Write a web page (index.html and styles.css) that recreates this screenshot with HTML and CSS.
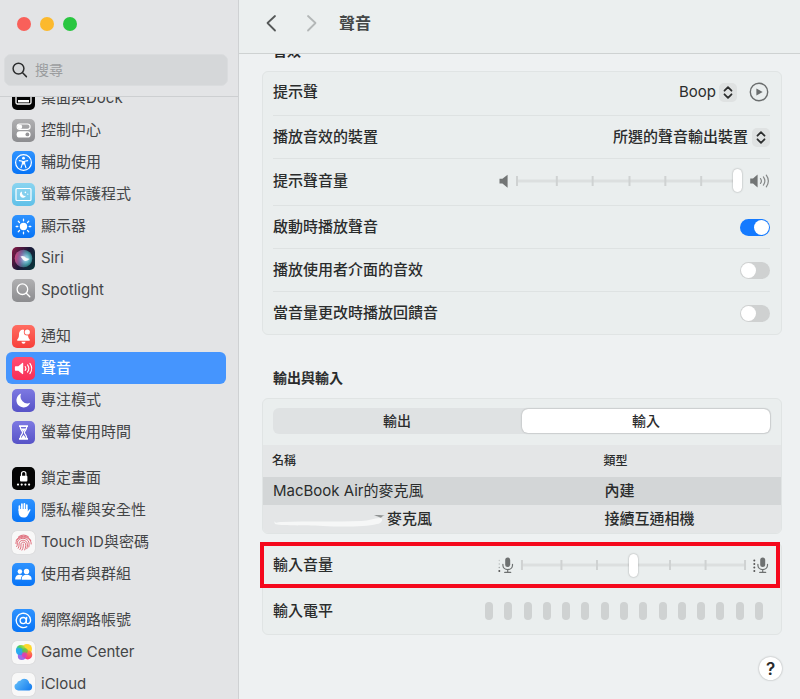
FILE: index.html
```html
<!DOCTYPE html>
<html lang="zh-Hant">
<head>
<meta charset="utf-8">
<meta name="viewport" content="width=device-width, initial-scale=1">
<title>聲音</title>
<link rel="stylesheet" href="styles.css">
</head>
<body>
<div class="window">
  <aside class="sidebar">
    <div class="sidebar-top">
      <div class="lights">
        <button class="light close" aria-label="關閉"></button>
        <button class="light minimise" aria-label="縮到最小"></button>
        <button class="light zoom" aria-label="縮放"></button>
      </div>
      <label class="search">
        <svg width="16" height="16" viewBox="0 0 16 16" fill="none" stroke="#2c2d2e" stroke-width="1.5" stroke-linecap="round"><circle cx="6.5" cy="6.6" r="5.4"/><path d="M10.6 10.8 14.4 14.6"/></svg>
        <input type="search" placeholder="搜尋" aria-label="搜尋">
      </label>
    </div>
    <nav class="list">
      <div class="group">
        <a href="#" class="item"><svg class="icon black" viewBox="0 0 23 23"><rect x="4" y="5" width="15" height="12" rx="1.5" fill="none" stroke="#fff" stroke-width="1.3"/><rect x="6" y="13" width="11" height="2.4" fill="#fff"/></svg>桌面與Dock</a>
        <a href="#" class="item"><svg class="icon gray" viewBox="0 0 23 23"><rect x="5.1" y="5" width="13" height="5.4" rx="2.7" fill="none" stroke="#fff" stroke-width="1.1"/><circle cx="7.9" cy="7.7" r="2.3" fill="#fff"/><rect x="4.6" y="12.2" width="14" height="6.4" rx="3.2" fill="#fff"/><circle cx="15.4" cy="15.4" r="1.9" fill="#949497"/></svg>控制中心</a>
        <a href="#" class="item"><svg class="icon blue" viewBox="0 0 23 23"><circle cx="11.5" cy="11.5" r="7.9" fill="none" stroke="#fff" stroke-width="1.2"/><circle cx="11.5" cy="7.2" r="1.4" fill="#fff"/><path d="M7.3 9.6 10.4 10.3V12.6L9 16.8M15.7 9.6 12.6 10.3V12.6L14 16.8" fill="none" stroke="#fff" stroke-width="1.1" stroke-linecap="round" stroke-linejoin="round"/><path d="M10.3 9.9h2.4v3.6h-2.4z" fill="#fff"/></svg>輔助使用</a>
        <a href="#" class="item"><svg class="icon sky" viewBox="0 0 23 23"><rect x="4" y="5.5" width="15" height="12" rx="1" fill="#8ed3ef" fill-opacity=".5" stroke="#fff" stroke-width="1.2"/><path d="M10 8.600a3.200 3.200 0 1 0 4 4.200 3.300 3.300 0 0 1-4-4.200z" fill="#fff"/><circle cx="13.400" cy="9.400" r=".8" fill="#fff"/><circle cx="15.800" cy="11.200" r=".6" fill="#fff"/></svg>螢幕保護程式</a>
        <a href="#" class="item"><svg class="icon blue" viewBox="0 0 23 23"><circle cx="11.5" cy="11.5" r="3.7" fill="#fff"/><path d="M11.5 4.2v1.6M11.5 17.2v1.6M4.2 11.5h1.6M17.2 11.5h1.6M6.3 6.3 7.5 7.5M15.5 15.5 16.7 16.7M6.3 16.7 7.5 15.5M15.5 7.5 16.7 6.3" stroke="#fff" stroke-width="1.3" stroke-linecap="round"/></svg>顯示器</a>
        <a href="#" class="item"><svg class="icon siri" viewBox="0 0 23 23">
          <defs><radialGradient id="orb" cx=".58" cy=".5" r=".55"><stop offset="0" stop-color="#fff"/><stop offset=".3" stop-color="#9fd0ea"/><stop offset=".65" stop-color="#4a93a4" stop-opacity=".9"/><stop offset="1" stop-color="#2b6a6a" stop-opacity=".5"/></radialGradient>
          <linearGradient id="rose" x1="0" y1=".3" x2="1" y2=".5"><stop offset="0" stop-color="#d9407c"/><stop offset=".4" stop-color="#8f5aa6" stop-opacity=".6"/><stop offset=".8" stop-color="#2cc3b4" stop-opacity=".2"/></linearGradient></defs>
          <circle cx="11.5" cy="11.5" r="8.800" fill="url(#orb)"/><circle cx="11.5" cy="11.5" r="8.800" fill="url(#rose)"/><path d="M8.400 9.600c2-1.600 4.600-.2 5.600 1.300 1.200.3 3.100.5 3.700 1.200-1.300.8-2.600 1.900-4.400 1.800-2.200-.1-2.800-2.200-4.900-4.300z" fill="#fff" opacity=".9"/></svg>Siri</a>
        <a href="#" class="item"><svg class="icon gray" viewBox="0 0 23 23" fill="none" stroke="#fff" stroke-width="1.3" stroke-linecap="round"><circle cx="10.400" cy="10.200" r="5.300"/><path d="M14.300 14.200 17.800 17.700"/></svg>Spotlight</a>
      </div>
      <div class="group">
        <a href="#" class="item"><svg class="icon red" viewBox="0 0 23 23"><path d="M11.300 4.400c-3.200.2-4.300 2.600-4.300 5 0 3.100-.9 4.100-1.700 5.100-.5.700-.2 1.200.5 1.200h11.400c.7 0 1-.5.500-1.200-.8-1-1.700-2-1.700-5.100z" fill="#fff"/><path d="M9.500 16.700h4a2 2 0 0 1-4 0z" fill="#fff"/><circle cx="15.300" cy="7" r="3.500" fill="#fb5a53"/><circle cx="15.300" cy="7" r="2.600" fill="#fff"/></svg>通知</a>
        <a href="#" class="item selected" aria-current="page"><svg class="icon pink" viewBox="0 0 23 23"><path d="M3.500 9.300h2.800l4-3.300c.4-.3.900-.1.900.4v10.200c0 .5-.5.700-.9.400l-4-3.300H3.500c-.4 0-.6-.2-.6-.6V9.900c0-.4.200-.6.600-.6z" fill="#fff"/><path d="M13.200 9.500a3.400 3.400 0 0 1 0 4M15.500 7.900a6 6 0 0 1 0 7.200M17.900 6.400a8.800 8.800 0 0 1 0 10.200" fill="none" stroke="#fff" stroke-width="1.100" stroke-linecap="round"/></svg>聲音</a>
        <a href="#" class="item"><svg class="icon indigo" viewBox="0 0 23 23"><path d="M9.200 4.600a7.100 7.100 0 1 0 9 9.200 6.900 6.900 0 0 1-9-9.200z" fill="#fff"/></svg>專注模式</a>
        <a href="#" class="item"><svg class="icon indigo" viewBox="0 0 23 23"><path d="M7 4.200h9v1.700H7zM7 17.100h9v1.700H7z" fill="#fff"/><path d="M8.200 5.500c0 3.500 2.400 4.300 2.400 6s-2.400 2.500-2.400 6M14.800 5.500c0 3.500-2.400 4.300-2.400 6s2.400 2.500 2.400 6" fill="none" stroke="#fff" stroke-width="1.200"/><path d="M8.800 7.400h5.400l-2.700 3.400zM11.500 13.800l2.600 3.400H8.900z" fill="#fff"/></svg>螢幕使用時間</a>
      </div>
      <div class="group">
        <a href="#" class="item"><svg class="icon black" viewBox="0 0 23 23"><rect x="8" y="8.800" width="7.400" height="5.700" rx="1" fill="#fff"/><path d="M9.500 9V6.700a2.200 2.200 0 0 1 4.400 0V9" fill="none" stroke="#fff" stroke-width="1.200"/><g fill="#fff"><circle cx="6" cy="17.600" r="1.100"/><circle cx="9.700" cy="17.600" r="1.100"/><circle cx="13.400" cy="17.600" r="1.100"/><circle cx="17.100" cy="17.600" r="1.100"/></g></svg>鎖定畫面</a>
        <a href="#" class="item"><svg class="icon blue" viewBox="0 0 23 23"><path d="M7.400 11.500V7.200M9.900 10.500V5.200M12.400 10.500V4.800M14.800 11V6.200" stroke="#fff" stroke-width="1.700" stroke-linecap="round"/><path d="M6.600 10h9v2.600l1.700-2.100c.6-.6 1.500 0 1.100.8l-2.600 5c-.8 1.500-2 2.300-4 2.300-3.300 0-5.200-1.900-5.200-5z" fill="#fff"/></svg>隱私權與安全性</a>
        <a href="#" class="item"><svg class="icon white" viewBox="0 0 23 23" fill="none" stroke="#dc5c6c" stroke-width=".9" stroke-linecap="round"><path d="M6.500 5.800a7.600 7.600 0 0 1 10 0M4.300 9.200c2.200-5.200 12-5.800 14.500.4M3.900 12.500c-.2-8.600 15.500-8.800 15.300.5M4.700 15.600c1.500-1.500-.4-3.600 1.400-6 2.500-3.400 9.300-3 10.700 1.500.5 1.900.3 3.400 0 4.900M6.200 17.300c1.600-2 .2-4 1.300-6 1.500-2.900 6.800-2.600 7.700 1 .5 2 .2 3.800-.4 5.400M8 18.500c1.700-2.200.5-4.300 1.200-6.100.9-1.900 3.900-1.600 4.400.6.400 2-.1 4-.9 5.900M10 19.100c1.500-2.300 1.300-4.200 1.300-6"/></svg>Touch ID與密碼</a>
        <a href="#" class="item"><svg class="icon blue" viewBox="0 0 23 23" fill="#fff"><circle cx="7.900" cy="8.600" r="2.300"/><path d="M3.200 16.400c0-3.300 2-4.600 4.700-4.600 1.100 0 2 .2 2.700.7-1.300 1-1.700 2.500-1.700 3.900z"/><circle cx="14.500" cy="8.400" r="2.700"/><path d="M9.700 16.800c-.3-3.600 2-5 4.900-5 2.800 0 5.300 1.400 5 5z"/></svg>使用者與群組</a>
      </div>
      <div class="group">
        <a href="#" class="item"><svg class="icon blue" viewBox="0 0 23 23" fill="none" stroke="#fff" stroke-width="1.300" stroke-linecap="round"><circle cx="11.200" cy="11.600" r="3.100"/><path d="M14.700 8.500 14.200 12.700c-.2 2.900 4.400 2.500 4.400-1.700a7.200 7.200 0 1 0-3.800 6.800"/></svg>網際網路帳號</a>
        <a href="#" class="item"><svg class="icon white" viewBox="0 0 23 23">
          <defs><linearGradient id="g1" x1="0" y1="1" x2="1" y2="0"><stop offset=".3" stop-color="#29b6f5"/><stop offset=".6" stop-color="#54cf58"/><stop offset="1" stop-color="#ffe22a"/></linearGradient><linearGradient id="g2" x1="0" y1="0" x2="0" y2="1"><stop offset="0" stop-color="#ff9c2e"/><stop offset="1" stop-color="#fb2d78"/></linearGradient></defs>
          <circle cx="15" cy="7.900" r="5" fill="#ffd72e"/><circle cx="9" cy="9.100" r="5.100" fill="url(#g1)"/><circle cx="15.700" cy="13.800" r="4.600" fill="url(#g2)"/><circle cx="9.800" cy="14.900" r="4" fill="#8b52e8" opacity=".85"/><circle cx="7.800" cy="10.500" r="3.600" fill="#27a9f1" opacity=".8"/><circle cx="13" cy="10" r="2.800" fill="#63bd4a" opacity=".8"/><circle cx="12.600" cy="14" r="2.800" fill="#e63cab" opacity=".8"/></svg>Game Center</a>
        <a href="#" class="item"><svg class="icon white" viewBox="0 0 23 23"><defs><linearGradient id="cl" x1="0" y1="0" x2="1" y2=".6"><stop offset="0" stop-color="#6cc5fa"/><stop offset="1" stop-color="#1e84f0"/></linearGradient></defs><path d="M6.300 17.400a3.700 3.700 0 0 1-1.300-7.200 3 3 0 0 1 3.300-2.500 5 5 0 0 1 8.900 2.500 3.700 3.700 0 0 1 .2 7.200z" fill="url(#cl)"/></svg>iCloud</a>
      </div>
    </nav>
  </aside>

  <main class="main">
    <header class="toolbar">
      <button class="nav-button" aria-label="返回"><svg width="12" height="18" viewBox="0 0 12 18"><path d="M10 2 2.500 9l7.500 7.500" fill="none" stroke="#555858" stroke-width="1.800" stroke-linecap="round" stroke-linejoin="round"/></svg></button>
      <button class="nav-button" aria-label="往前" disabled><svg width="12" height="18" viewBox="0 0 12 18"><path d="M2 2l7.500 7L2 16.500" fill="none" stroke="#b3b7b7" stroke-width="1.800" stroke-linecap="round" stroke-linejoin="round"/></svg></button>
      <h1 class="title">聲音</h1>
    </header>
    <div class="content">
      <h2 class="heading scrolled">音效</h2>
      <section class="card">
        <div class="row raised">
          <label for="alert">提示聲</label>
          <span class="popup"><select id="alert" class="latin"><option>Boop</option></select><svg class="arrows" viewBox="0 0 18 18"><path d="M5.500 7.200 9 3.700l3.500 3.500M5.500 10.800 9 14.300l3.500-3.500"/></svg></span>
          <button class="play" aria-label="播放"><svg width="20" height="20" viewBox="0 0 20 20"><circle cx="10" cy="10" r="8.700" fill="none" stroke="#6b6e6e" stroke-width="1.400"/><path d="M7.400 6.400v7.200l6.300-3.600z" fill="#6b6e6e"/></svg></button>
        </div>
        <div class="row">
          <label for="device">播放音效的裝置</label>
          <span class="popup"><select id="device"><option>所選的聲音輸出裝置</option></select><svg class="arrows" viewBox="0 0 18 18"><path d="M5.500 7.200 9 3.700l3.500 3.500M5.500 10.800 9 14.300l3.500-3.500"/></svg></span>
        </div>
        <div class="row tall raised">
          <label for="alert-volume">提示聲音量</label>
          <div class="volume">
            <svg class="end" viewBox="0 0 16 18"><path d="M2.500 6.800h2.900l5.200-4.100v13l-5.200-4.100H2.500z" fill="#727575"/></svg>
            <div class="slider">
              <svg class="scale" viewBox="0 0 230 10" preserveAspectRatio="none"><path d="M4 3.500h222v3H4z" fill="#dcdfdf"/><path d="M3 0h2v10H3zM43 0h2v10h-2zM79 0h2v10h-2zM116 0h2v10h-2zM152 0h2v10h-2zM188 0h2v10h-2z" fill="#cfd2d2"/></svg>
              <input id="alert-volume" type="range" min="0" max="6" step="any" value="6">
            </div>
            <svg class="end wide" viewBox="0 0 21 18"><path d="M1.200 6.400h2.800l4.600-3.800v12.800l-4.600-3.800H1.200z" fill="#727575"/><path d="M11.500 6.600a4 4 0 0 1 0 4.800M14.400 4.900a7 7 0 0 1 0 8.200M17.300 3.200a10 10 0 0 1 0 11.600" fill="none" stroke="#858888" stroke-width="1.200" stroke-linecap="round"/></svg>
          </div>
        </div>
        <div class="row"><label for="startup">啟動時播放聲音</label><input id="startup" class="switch" type="checkbox" checked></div>
        <div class="row"><label for="interface">播放使用者介面的音效</label><input id="interface" class="switch" type="checkbox"></div>
        <div class="row"><label for="feedback">當音量更改時播放回饋音</label><input id="feedback" class="switch" type="checkbox"></div>
      </section>

      <h2 class="heading">輸出與輸入</h2>
      <section class="card devices">
        <div class="tabs" role="tablist">
          <button class="tab" role="tab" aria-selected="false">輸出</button>
          <button class="tab active" role="tab" aria-selected="true">輸入</button>
        </div>
        <table class="table">
          <thead><tr><th class="name">名稱</th><th>類型</th></tr></thead>
          <tbody>
            <tr class="chosen"><td class="latin">MacBook Air的麥克風</td><td>內建</td></tr>
            <tr><td><svg class="smear" width="114" height="16" viewBox="0 0 114 16"><path d="M1 9c2 3 3 1 8 1 25-1 55 0 79-1 8 0 13-3 19-3 4 0 2 6-3 6-12 3-36 3-54 2-20-1-44 0-48-2z" fill="#f6f7f7"/><path d="M101 3.500c4-.8 7-.6 11 .1-2 .2-3 1-4 2.200-2-.8-4-1.800-7-2.300z" fill="#919494"/></svg>麥克風</td><td>接續互通相機</td></tr>
          </tbody>
        </table>
      </section>

      <section class="card input">
        <div class="row marked">
          <label for="input-volume">輸入音量</label>
          <div class="volume">
            <svg class="end" viewBox="0 0 16 18"><g fill="#8a8d8d"><circle cx="1.300" cy="4.500" r=".7" opacity=".4"/><circle cx="1.300" cy="8" r=".7" opacity=".5"/><circle cx="1.300" cy="11.500" r=".8" opacity=".7"/><circle cx="1.300" cy="15" r="1" fill="#555"/></g><rect x="7.200" y="1.500" width="5" height="9.500" rx="2.500" fill="#6e7171"/><path d="M4.900 8.300v1a4.800 4.300 0 0 0 9.600 0v-1M9.700 13.600v2.600M6.700 16.400h6" fill="none" stroke="#6e7171" stroke-width="1.200" stroke-linecap="round"/></svg>
            <div class="slider">
              <svg class="scale" viewBox="0 0 234 10" preserveAspectRatio="none"><path d="M4 3.500h226v3H4z" fill="#dcdfdf"/><path d="M3 0h2v10H3zM43 0h2v10h-2zM79 0h2v10h-2zM153 0h2v10h-2zM189 0h2v10h-2zM229 0h2v10h-2z" fill="#cfd2d2"/></svg>
              <input id="input-volume" type="range" min="0" max="6" step="any" value="3">
            </div>
            <svg class="end" viewBox="0 0 16 18"><g fill="#555"><circle cx="1.300" cy="4.500" r="1"/><circle cx="1.300" cy="8" r="1"/><circle cx="1.300" cy="11.500" r="1"/><circle cx="1.300" cy="15" r="1"/></g><rect x="7.200" y="1.500" width="5" height="9.500" rx="2.500" fill="#6e7171"/><path d="M4.900 8.300v1a4.800 4.300 0 0 0 9.600 0v-1M9.700 13.600v2.600M6.700 16.400h6" fill="none" stroke="#6e7171" stroke-width="1.200" stroke-linecap="round"/></svg>
          </div>
        </div>
        <div class="row tall">
          <span>輸入電平</span>
          <div class="levels" role="img" aria-label="輸入電平"><i></i><i></i><i></i><i></i><i></i><i></i><i></i><i></i><i></i><i></i><i></i><i></i><i></i><i></i><i></i></div>
        </div>
      </section>
      <footer class="footer"><button class="help" aria-label="輔助說明">?</button></footer>
    </div>
  </main>
</div>
</body>
</html>
```
FILE: styles.css
```css
* { box-sizing: border-box; }

body {
  margin: 0;
  font: 15px/20px Inter, "Noto Sans CJK TC", sans-serif;
  color: #2a2c2c;
  background: #eef1f2;
}

button, input, select { font: inherit; color: inherit; }
button { padding: 0; border: 0; background: none; }

.window {
  display: flex;
  height: 100vh;
  overflow: hidden;
}

/* Sidebar */
.sidebar {
  display: flex;
  flex-direction: column;
  flex: none;
  width: 239px;
  background: #e3e4e6;
  border-right: 1px solid #cfd1d3;
}

.sidebar-top {
  flex: none;
  padding: 17px 10px 10px 4px;
  border-bottom: 1px solid #cdcfd1;
}

.lights {
  display: flex;
  gap: 9px;
  padding-left: 13px;
  margin-bottom: 23px;
}

.light {
  width: 14px;
  height: 14px;
  border-radius: 50%;
}
.close { background: #f9605a; }
.minimise { background: #fcb92d; }
.zoom { background: #29c640; }

.search {
  display: flex;
  align-items: center;
  gap: 7px;
  height: 32px;
  padding: 0 7px;
  background: #d5d7d9;
  border: 1px solid #dadcde;
  border-radius: 7px;
}
.search svg { flex: none; }
.search input {
  flex: 1;
  min-width: 0;
  padding: 0;
  border: 0;
  outline: 0;
  background: none;
  font-size: 14px;
}
.search input::placeholder { color: #9b9d9f; }

.list {
  flex: 1;
  min-height: 0;
  padding: 0 12px 0 6px;
  overflow: hidden;
}

.group { margin-bottom: 14px; }
.group:first-child { margin-top: -15px; }

.item {
  display: flex;
  align-items: center;
  gap: 6px;
  height: 32px;
  padding: 0 6px;
  border-radius: 6px;
  color: #434547;
  text-decoration: none;
  white-space: nowrap;
}
.selected {
  background: #4595fe;
  color: #fff;
  font-weight: 500;
}

.icon {
  flex: none;
  width: 23px;
  height: 23px;
  border-radius: 5px;
}
.black { background: #050505; }
.gray { background: linear-gradient(#b0b0b2, #8c8c8f); }
.blue { background: linear-gradient(#2f93ff, #0874f6); }
.sky { background: linear-gradient(#8ad4f0, #5fc0e8); }
.siri { background: linear-gradient(120deg, #8c1846, #1d1839 50%, #06393a); }
.red { background: linear-gradient(#ff6d62, #f73f39); }
.pink { background: linear-gradient(#ff4e72, #f92e56); }
.indigo { background: linear-gradient(#7d79e2, #5753c7); }
.white { background: #f8f8f8; box-shadow: 0 0 1px #bbb; }

/* Main pane */
.main {
  display: flex;
  flex-direction: column;
  flex: 1;
  min-width: 0;
}

.toolbar {
  display: flex;
  align-items: center;
  flex: none;
  height: 54px;
  padding: 0 26px 7px;
  background: #ebefef;
  border-bottom: 1px solid #ced2d2;
}
.nav-button {
  display: flex;
  margin-right: 29px;
}
.nav-button + .nav-button { margin-right: 21px; }
.title {
  margin: 0;
  font-size: 16px;
  line-height: 24px;
  font-weight: 700;
  color: #454848;
}

.content {
  flex: 1;
  min-height: 0;
  padding: 0 18px 0 23px;
  overflow: hidden;
  font-weight: 500;
}

.heading {
  margin: 33px 11px 10px;
  font-size: 14px;
  line-height: 20px;
  font-weight: 700;
}
.scrolled { margin-top: -13px; }

.latin { font-weight: 400; }

.card {
  border: 1px solid #e0e4e4;
  border-radius: 6px;
  background: #eaeeee;
}

.row {
  display: flex;
  align-items: center;
  justify-content: space-between;
  height: 43px;
  margin: 0 11px 0 10px;
}
.row + .row { border-top: 1px solid #dee2e2; }
.tall { height: 47px; }
.raised { padding-bottom: 3px; }

.popup {
  display: flex;
  align-items: center;
  gap: 3px;
  margin-left: auto;
}
.popup select {
  appearance: none;
  border: 0;
  padding: 0;
  background: none;
}
.arrows {
  width: 18px;
  height: 19px;
  border-radius: 5px;
  background: #dfe2e2;
  fill: none;
  stroke: #2c2e2e;
  stroke-width: 1.8;
  stroke-linecap: round;
  stroke-linejoin: round;
  pointer-events: none;
}
.play {
  display: flex;
  margin: 0 1px 0 12px;
}

.volume {
  display: flex;
  align-items: center;
  width: 273px;
}
.end {
  flex: none;
  width: 16px;
  height: 18px;
}
.wide {
  width: 21px;
  margin-left: 7px;
}
.slider {
  display: grid;
  flex: 1;
  align-items: center;
}
.scale, .slider input { grid-area: 1 / 1; }
.scale {
  width: 100%;
  height: 10px;
}
.slider input {
  appearance: none;
  width: 100%;
  height: 24px;
  margin: 0;
  background: none;
}
.slider input::-webkit-slider-thumb {
  appearance: none;
  width: 9px;
  height: 23px;
  border-radius: 5px;
  background: #fff;
  box-shadow: 0 0 2px rgba(0, 0, 0, .35);
}

.switch {
  appearance: none;
  width: 30px;
  height: 17px;
  margin: 0;
  padding: 1px;
  border-radius: 9px;
  background: #cfd1d1;
}
.switch::before {
  content: "";
  display: block;
  width: 15px;
  height: 15px;
  border-radius: 50%;
  background: #fff;
}
.switch:checked { background: #147aff; }
.switch:checked::before { margin-left: auto; }

/* Devices */
.devices { overflow: hidden; }
.tabs {
  display: flex;
  height: 26px;
  margin: 9px 10px 11px;
  border-radius: 6px;
  background: #dfe2e3;
}
.tab {
  flex: 1;
  border-radius: 6px;
  font-size: 14px;
}
.active {
  margin: 1px;
  background: #fff;
  box-shadow: 0 0 2px rgba(0, 0, 0, .3);
}

.table {
  width: 100%;
  border-collapse: collapse;
  table-layout: fixed;
  background: #e4e6e7;
}
.table th {
  height: 32px;
  padding: 0 0 0 9px;
  font-size: 12px;
  font-weight: 500;
  text-align: left;
}
.table .name { width: 64%; }
.table td {
  height: 28px;
  padding: 0 0 0 10px;
}
.chosen { background: #d3d6d7; }
.smear { vertical-align: middle; }

/* Input */
.input { margin-top: 8px; }
.marked {
  height: 38px;
  margin: 3px 5px 3px 1px;
  padding: 0 7px 0 9px;
  outline: 4px solid #f5081c;
}
.input .volume { width: 271px; gap: 4px; }
.levels {
  display: flex;
  justify-content: space-between;
  width: 278px;
  margin-right: 7px;
}
.levels i {
  width: 8px;
  height: 18px;
  border-radius: 4px;
  background: #cfd2d2;
}

.footer {
  display: flex;
  justify-content: flex-end;
  margin-top: 22px;
}
.help {
  width: 23px;
  height: 23px;
  border-radius: 50%;
  background: #fff;
  box-shadow: 0 0 2px rgba(0, 0, 0, .35);
  font-size: 17px;
  font-weight: 600;
}
```
